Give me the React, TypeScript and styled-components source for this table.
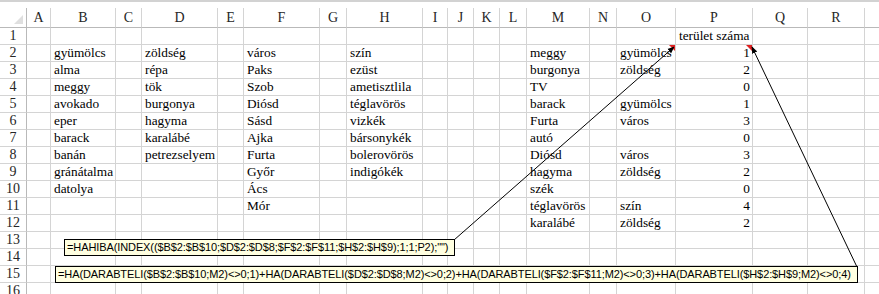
import React from 'react';
import styled, { createGlobalStyle } from 'styled-components';

const GlobalStyle = createGlobalStyle`
  html, body {
    margin: 0;
    padding: 0;
    background: #ffffff;
    overflow: hidden;
  }
`;

const COLS: { key: string; width: number }[] = [
  { key: 'A', width: 24 },
  { key: 'B', width: 65 },
  { key: 'C', width: 26 },
  { key: 'D', width: 76 },
  { key: 'E', width: 26 },
  { key: 'F', width: 76 },
  { key: 'G', width: 27 },
  { key: 'H', width: 76 },
  { key: 'I', width: 25 },
  { key: 'J', width: 26 },
  { key: 'K', width: 26 },
  { key: 'L', width: 27 },
  { key: 'M', width: 63 },
  { key: 'N', width: 27 },
  { key: 'O', width: 59 },
  { key: 'P', width: 77 },
  { key: 'Q', width: 55 },
  { key: 'R', width: 57 },
  { key: 'S', width: 60 },
];

const ROW_HEADER_W = 27;
const HEADER_H = 20;
const ROW_H = 17;
const ROW_COUNT = 16;

type RowData = Record<string, string | number>;

const DATA: Record<number, RowData> = {
  1: { P: 'terület száma' },
  2: { B: 'gyümölcs', D: 'zöldség', F: 'város', H: 'szín', M: 'meggy', O: 'gyümölcs', P: 1 },
  3: { B: 'alma', D: 'répa', F: 'Paks', H: 'ezüst', M: 'burgonya', O: 'zöldség', P: 2 },
  4: { B: 'meggy', D: 'tök', F: 'Szob', H: 'ametisztlila', M: 'TV', P: 0 },
  5: { B: 'avokado', D: 'burgonya', F: 'Diósd', H: 'téglavörös', M: 'barack', O: 'gyümölcs', P: 1 },
  6: { B: 'eper', D: 'hagyma', F: 'Sásd', H: 'vizkék', M: 'Furta', O: 'város', P: 3 },
  7: { B: 'barack', D: 'karalábé', F: 'Ajka', H: 'bársonykék', M: 'autó', P: 0 },
  8: { B: 'banán', D: 'petrezselyem', F: 'Furta', H: 'bolerovörös', M: 'Diósd', O: 'város', P: 3 },
  9: { B: 'gránátalma', F: 'Győr', H: 'indigókék', M: 'hagyma', O: 'zöldség', P: 2 },
  10: { B: 'datolya', F: 'Ács', M: 'szék', P: 0 },
  11: { F: 'Mór', M: 'téglavörös', O: 'szín', P: 4 },
  12: { M: 'karalábé', O: 'zöldség', P: 2 },
};

// cells carrying a comment indicator
const COMMENTED = new Set(['O2', 'P2']);

const FORMULA_LOOKUP = '=HAHIBA(INDEX(($B$2:$B$10;$D$2:$D$8;$F$2:$F$11;$H$2:$H$9);1;1;P2);"")';
const FORMULA_AREA =
  '=HA(DARABTELI($B$2:$B$10;M2)<>0;1)+HA(DARABTELI($D$2:$D$8;M2)<>0;2)+HA(DARABTELI($F$2:$F$11;M2)<>0;3)+HA(DARABTELI($H$2:$H$9;M2)<>0;4)';

const Sheet = styled.div`
  position: relative;
  width: 879px;
  height: 294px;
  overflow: hidden;
  background: #ffffff;
  font-family: 'Liberation Serif', 'Times New Roman', serif;
`;

const TopStrip = styled.div`
  height: 8px;
  box-sizing: border-box;
  border-top: 2px solid #d2d2d2;
  background: #ffffff;
`;

const Grid = styled.div`
  display: grid;
  grid-template-columns: ${ROW_HEADER_W}px ${COLS.map((c) => `${c.width}px`).join(' ')};
  grid-template-rows: ${HEADER_H}px repeat(${ROW_COUNT}, ${ROW_H}px);
`;

const Corner = styled.div`
  position: relative;
  box-sizing: border-box;
  border-right: 1px solid #b9b9b9;
  border-bottom: 1px solid #b9b9b9;
  background: #ffffff;

  &::after {
    content: '';
    position: absolute;
    right: 3px;
    bottom: 3px;
    width: 0;
    height: 0;
    border-left: 9px solid transparent;
    border-bottom: 9px solid #dfdfdf;
  }
`;

const ColHeader = styled.div`
  box-sizing: border-box;
  border-right: 1px solid #d4d4d4;
  border-bottom: 1px solid #b9b9b9;
  background: #ffffff;
  color: #262626;
  font-size: 14px;
  display: flex;
  align-items: center;
  justify-content: center;
  padding-top: 1px;
`;

const RowHeader = styled.div`
  box-sizing: border-box;
  border-right: 1px solid #b9b9b9;
  border-bottom: 1px solid #d4d4d4;
  background: #ffffff;
  color: #262626;
  font-size: 14px;
  display: flex;
  align-items: flex-end;
  justify-content: center;
  line-height: 16px;
`;

const Cell = styled.div<{ $numeric?: boolean; $comment?: boolean }>`
  position: relative;
  box-sizing: border-box;
  border-right: 1px solid #d4d4d4;
  border-bottom: 1px solid #d4d4d4;
  color: #000000;
  font-size: 13.3px;
  line-height: 15px;
  white-space: nowrap;
  overflow: visible;
  display: flex;
  align-items: flex-end;
  justify-content: ${({ $numeric }) => ($numeric ? 'flex-end' : 'flex-start')};
  padding: 0 ${({ $numeric }) => ($numeric ? '2px' : '0')} 1px
    ${({ $numeric }) => ($numeric ? '0' : '3px')};

  &::after {
    content: '';
    display: ${({ $comment }) => ($comment ? 'block' : 'none')};
    position: absolute;
    top: 0;
    right: 0;
    width: 0;
    height: 0;
    border-left: 6px solid transparent;
    border-top: 6px solid #e02020;
  }
`;

const Overlay = styled.svg`
  position: absolute;
  left: 0;
  top: 0;
  pointer-events: none;
`;

const CommentBox = styled.div<{ $left: number; $top: number; $width: number }>`
  position: absolute;
  left: ${({ $left }) => $left}px;
  top: ${({ $top }) => $top}px;
  width: ${({ $width }) => $width}px;
  height: 17px;
  box-sizing: border-box;
  border: 1px solid #000000;
  background: #ffffe1;
  color: #000000;
  font-family: 'Liberation Sans', Arial, sans-serif;
  font-size: 11px;
  letter-spacing: -0.1px;
  line-height: 15px;
  white-space: nowrap;
  padding-left: 2px;
`;

export default function App() {
  const rows = Array.from({ length: ROW_COUNT }, (_, i) => i + 1);

  return (
    <>
      <GlobalStyle />
      <Sheet>
        <TopStrip />
        <Grid>
          <Corner />
          {COLS.map((c) => (
            <ColHeader key={c.key}>{c.key === 'S' ? '' : c.key}</ColHeader>
          ))}
          {rows.map((r) => (
            <React.Fragment key={r}>
              <RowHeader>{r}</RowHeader>
              {COLS.map((c) => {
                const value = DATA[r]?.[c.key];
                return (
                  <Cell
                    key={c.key}
                    $numeric={typeof value === 'number'}
                    $comment={COMMENTED.has(`${c.key}${r}`)}
                  >
                    {value ?? ''}
                  </Cell>
                );
              })}
            </React.Fragment>
          ))}
        </Grid>

        <Overlay width={879} height={294}>
          <defs>
            <marker
              id="head"
              viewBox="0 0 10 10"
              refX="9"
              refY="5"
              markerWidth="7"
              markerHeight="7"
              orient="auto"
            >
              <path d="M0 1 L10 5 L0 9 Z" fill="#000" />
            </marker>
          </defs>
          <line x1={454} y1={240} x2={674} y2={47} stroke="#000" strokeWidth={1} markerEnd="url(#head)" />
          <line x1={857} y1={267} x2={752} y2={47} stroke="#000" strokeWidth={1} markerEnd="url(#head)" />
        </Overlay>

        <CommentBox $left={64} $top={239} $width={391}>
          {FORMULA_LOOKUP}
        </CommentBox>
        <CommentBox $left={55} $top={266} $width={803}>
          {FORMULA_AREA}
        </CommentBox>
      </Sheet>
    </>
  );
}
